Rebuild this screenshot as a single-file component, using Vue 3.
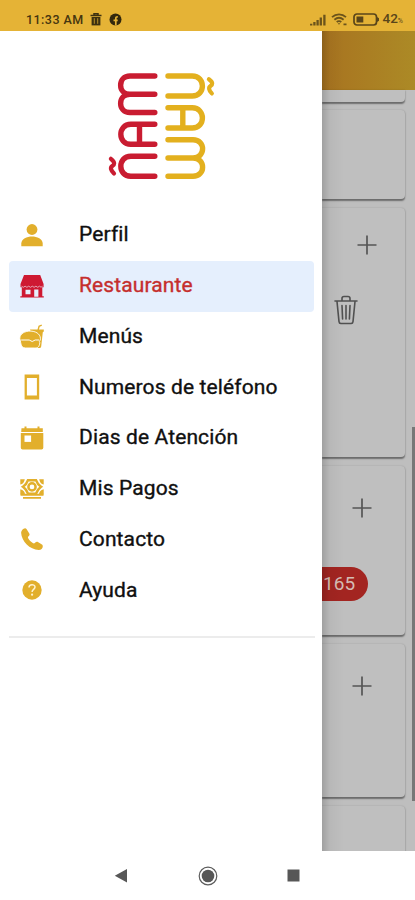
<script setup>
const items = [
  { id: 'perfil', label: 'Perfil' },
  { id: 'restaurante', label: 'Restaurante', active: true },
  { id: 'menus', label: 'Menús' },
  { id: 'telefono', label: 'Numeros de teléfono' },
  { id: 'dias', label: 'Dias de Atención' },
  { id: 'pagos', label: 'Mis Pagos' },
  { id: 'contacto', label: 'Contacto' },
  { id: 'ayuda', label: 'Ayuda' },
]
</script>

<template>
  <div class="screen">
    <header class="status">
      <span class="time">11:33 AM</span>
      <svg class="s-trash" width="12" height="13" viewBox="0 0 12 13">
        <path d="M.5 2.6h11M4 2V.8h4V2" fill="none" stroke="#3d3010" stroke-width="1.5" />
        <path d="M1.6 4h8.8v8.4H1.6z" fill="#3d3010" />
        <path d="M4.3 5.2v5.6M7.7 5.2v5.6" stroke="#b98f26" stroke-width="1" />
      </svg>
      <svg class="s-fb" width="13" height="13" viewBox="0 0 13 13">
        <circle cx="6.5" cy="6.5" r="6" fill="#33280d" />
        <path d="M6.800 12.500V5.400c0-1.200.6-1.700 2-1.600M4.500 7.400h4.200" fill="none" stroke="#e5b336" stroke-width="1.700" />
      </svg>
      <div class="status-right">
        <svg width="16" height="12" viewBox="0 0 16 12">
          <path d="M1.200 11.500V9.800M4.400 11.500V8M7.600 11.500V6M10.800 11.500V3.500M14.400 11.500V.8" stroke="#6b531b" stroke-width="2.300" />
        </svg>
        <svg width="17" height="13" viewBox="0 0 17 13">
          <path d="M1 4.200c4-3.700 10-3.700 14 0M3.400 6.700c2.800-2.400 6.400-2.400 9.200 0M5.700 9c1.500-1.200 3.100-1.200 4.600 0" fill="none" stroke="#6b531b" stroke-width="1.800" />
          <path d="M6.700 10.200h2.600L8 11.800zM12.500 10.600h3v1.600h-3z" fill="#6b531b" />
        </svg>
        <svg width="27" height="13" viewBox="0 0 27 13">
          <rect x="1" y="1" width="22.500" height="11" rx="3" fill="none" stroke="#59451a" stroke-width="1.700" />
          <path d="M3.500 3.500h6.800v6H3.500z" fill="#59451a" />
          <path d="M24 4l2 1.200v2.600L24 9z" fill="#59451a" />
        </svg>
        <span class="pct">42<small>%</small></span>
      </div>
    </header>

    <main class="body">
      <aside class="drawer">
        <svg class="logo" width="112" height="112" viewBox="105 70 112 112" fill="none" stroke-width="5.400" stroke-linecap="round" stroke-linejoin="round">
          <g stroke="#c91c31">
            <path d="M154.800 76H130C117.500 76 117.500 94.300 130 94.300H154.800M130 94.300C117.500 94.300 117.500 112.500 130 112.500H154.800" />
            <path d="M154.800 124.300H130.800C117.500 124.300 117.500 144.300 130.800 144.300H154.800M139.500 124.300V144.300" />
            <path d="M154.800 156.200H130.800C117.500 156.200 117.500 176.300 130.800 176.300H154.800" />
            <path d="M110.900 158.800C115.500 162.500 114.500 164.500 112.300 166S110.500 170 114 173.500" stroke-width="4.200" />
          </g>
          <g stroke="#e3b01e">
            <path d="M168 76H192.200C205.800 76 205.800 96 192.200 96H168" />
            <path d="M168 107.800H192.200C205.800 107.800 205.800 128 192.200 128H168M182.800 107.800V128" />
            <path d="M168 139.700H193C205.800 139.700 205.800 158 193 158H168M193 158C205.800 158 205.800 176.300 193 176.300H168" />
            <path d="M208.900 79.200C213.500 82.500 212.500 84.700 210.500 86S208.500 90 211.800 93.400" stroke-width="4.200" />
          </g>
        </svg>

        <nav class="menu">
          <a v-for="item in items" :key="item.id" class="item" :class="{ active: item.active }">
            <svg class="icon" width="26" height="26" viewBox="0 0 26 26">
              <g v-if="item.id === 'perfil'" fill="currentColor">
                <circle cx="13" cy="7.500" r="5.400" />
                <path d="M2.300 24.200v-2.600C2.300 17 8 14.600 13 14.600s10.700 2.400 10.700 7v2.600z" />
              </g>
              <g v-else-if="item.id === 'restaurante'">
                <path d="M5 2h16.200l3.400 9v3.200h-1.300v9h1.500v1.200H1.300v-1.200h1.500v-9H1.500V11z" fill="currentColor" />
                <path d="M2.500 13.200q1.800 2.200 3.600 0 1.800 2.200 3.600 0 1.800 2.200 3.600 0 1.800 2.200 3.600 0 1.800 2.200 3.600 0 1.500 2 3.100 0" fill="none" stroke="#e8c5d3" stroke-width=".8" />
                <path d="M6.500 16.800h5v4.500h-5zM15.200 16.500h4.200v7.300h-4.200z" fill="#e6effc" />
              </g>
              <g v-else-if="item.id === 'menus'">
                <path d="M11 6.500h7.500l1-3.800 3-1.200.5 1.200-2.300 1-.7 2.800h4.800v2l-1 .7-1.600 14.300q-.2 1.500-1.800 1.500h-3z" fill="currentColor" />
                <path d="M.8 15.300C1.200 5.700 21 5.700 21.400 15.300v1.500l-1 1.600.4 1.300c-.4 4.500-2.300 5.300-5 5.300H6.700c-3 0-4.600-1.600-5-5.300z" fill="currentColor" stroke="#fff" stroke-width=".9" />
                <path d="M2.200 17h8l3 1.500 3-1.500h4" fill="none" stroke="#fff" stroke-width="1" />
              </g>
              <path v-else-if="item.id === 'telefono'" d="M5.600.4h14.600v25.200H5.600zM7.900 4v17.600h10V4z" fill="currentColor" fill-rule="evenodd" />
              <g v-else-if="item.id === 'dias'">
                <path d="M2.500 3.300h3V1.500h2v1.800h11V1.500h2v1.800h3.300V7H2.200zM1.800 8h22.500v14.800q0 1.700-1.700 1.700h-19q-1.800 0-1.800-1.800z" fill="currentColor" />
                <path d="M5.500 10.500h6.600v6.400H5.500z" fill="#fff" />
              </g>
              <g v-else-if="item.id === 'pagos'" fill="none" stroke="currentColor">
                <path d="M1.300 3.300h4.500Q5 8 1.300 8.500zM24.700 3.300h-4.500q.8 4.700 4.500 5.200zM1.300 13.200Q6 14.500 6 18.500H1.300zM24.700 13.200Q20 14.500 20 18.500h4.700z" fill="currentColor" stroke="none" />
                <path d="M9 4.200h8q1.500 4.300 5 6.500-3.500 2.500-5 7H9q-1.500-4.500-5-7Q7.500 8.500 9 4.200z" stroke-width="2.500" />
                <circle cx="13" cy="10.900" r="3.600" stroke-width="2.500" />
                <path d="M1.500 18.800h23M4 21.900h18" stroke-width="1.900" />
              </g>
              <path v-else-if="item.id === 'contacto'" d="M6.100 2.200c-2.100.4-3.900 2.200-4 4.600C2.700 15.500 10.700 23.700 19.800 24c2.300-.1 4-1.500 4-3.700 0-1-.3-1.500-.9-1.900l-4-2.500c-1-.6-2-.1-3.100 1.100-.6.600-1.200.5-2 0-1.800-1.200-3.500-2.900-4.600-4.800-.4-.6-.4-1.100.1-1.600 1.300-1.200 1.600-2.200 1-3.200L7.500 3.100c-.4-.6-.8-.9-1.400-.9z" fill="currentColor" />
              <g v-else>
                <circle cx="13" cy="13" r="9.700" fill="currentColor" />
                <path d="M10 10.600c0-4 6-3.700 6-.5 0 2.400-2.900 2.100-2.900 4.800" fill="none" stroke="#fff3d0" stroke-width="1.500" />
                <circle cx="13.100" cy="17.700" r="1.100" fill="#fff3d0" />
              </g>
            </svg>
            <span>{{ item.label }}</span>
          </a>
        </nav>
        <hr class="rule" />
      </aside>

      <section class="page">
        <div class="toolbar"></div>
        <div class="card first"></div>
        <div class="card second"></div>
        <div class="card third">
          <svg class="plus" width="20" height="20" viewBox="0 0 20 20"><path d="M10 .5v19M.5 10h19" stroke="#555" stroke-width="1.700" /></svg>
          <svg class="trash" width="24" height="30" viewBox="0 0 24 30" fill="none" stroke="#515151" stroke-width="1.600" stroke-linecap="round" stroke-linejoin="round">
            <path d="M1 6h22M3 6.500l2 20.200q.2 1.800 1.800 1.800h10.400q1.600 0 1.800-1.800L21 6.500M8 5.500v-2Q8 1.500 10 1.500h4q2 0 2 2v2M8 10.500l.6 13.500M12 10.500V24M16 10.500L15.400 24" />
          </svg>
        </div>
        <div class="card fourth">
          <svg class="plus" width="20" height="20" viewBox="0 0 20 20"><path d="M10 .5v19M.5 10h19" stroke="#555" stroke-width="1.700" /></svg>
          <span class="chip">165</span>
        </div>
        <div class="card fifth">
          <svg class="plus" width="20" height="20" viewBox="0 0 20 20"><path d="M10 .5v19M.5 10h19" stroke="#555" stroke-width="1.700" /></svg>
        </div>
        <div class="card sixth"></div>
        <div class="scrollbar"></div>
      </section>
    </main>

    <footer class="softkeys">
      <svg width="14" height="16" viewBox="0 0 14 16"><path d="M13 1v13.500L.8 7.800z" fill="#575757" /></svg>
      <svg width="20" height="20" viewBox="0 0 20 20">
        <circle cx="10" cy="10" r="8.800" fill="none" stroke="#5c5c5c" stroke-width="1.200" />
        <circle cx="10" cy="10" r="6.300" fill="#575757" />
      </svg>
      <svg width="13" height="13" viewBox="0 0 13 13"><path d="M.5.500h12v12H.5z" fill="#575757" /></svg>
    </footer>
  </div>
</template>

<style>
body { margin: 0; overflow: hidden; }
</style>

<style scoped>
.screen {
  width: 415px;
  height: 900px;
  display: flex;
  flex-direction: column;
  overflow: hidden;
  background: #fff;
  font-family: Roboto, sans-serif;
}
.status {
  box-sizing: border-box;
  height: 31px;
  flex: none;
  display: flex;
  align-items: center;
  padding: 8px 12px 0 26px;
  background: #e5b336;
  color: #45350f;
}
.time { width: 58px; font-size: 12.5px; font-weight: 500; letter-spacing: 0.45px; white-space: nowrap; }
.s-trash { margin-left: 6px; }
.s-fb { margin-left: 7px; }
.status-right { margin-left: auto; display: flex; align-items: center; gap: 5px; color: #59451a; }
.pct { margin-left: -2px; font-size: 13.5px; font-weight: 500; line-height: 14px; }
.pct small { font-size: 7px; font-weight: 400; }
.body { height: 820px; flex: none; display: flex; }
.drawer {
  width: 322px;
  flex: none;
  display: flex;
  flex-direction: column;
  background: #fff;
}
.logo { margin: 39px 0 0 105px; flex: none; }
.menu { display: flex; flex-direction: column; margin: 28px 8px 0 9px; }
.item {
  box-sizing: border-box;
  height: 50.75px;
  display: flex;
  align-items: center;
  gap: 34px;
  padding: 0 0 1px 10px;
  border-radius: 4px;
  color: #e2af2c;
}
.item span { color: #101010; font-size: 21px; line-height: 25px; letter-spacing: 0.12px; -webkit-text-stroke: 0.35px currentColor; }
.item.active { background: #e5effd; color: #ce1932; }
.item.active span { color: #c52e2d; }
.rule { width: 306px; height: 2px; margin: 20px 0 0 9px; border: 0; background: #ececec; }
.page {
  position: relative;
  flex: 1;
  display: flex;
  flex-direction: column;
  overflow: hidden;
  background: #bebebe;
}
.page::before {
  content: '';
  position: absolute;
  inset: 0 auto 0 0;
  width: 22px;
  background: linear-gradient(90deg, rgba(0, 0, 0, 0.16), rgba(0, 0, 0, 0.04) 35%, transparent);
}
.toolbar { height: 59px; flex: none; background: linear-gradient(90deg, #a87320, #ac8a26); }
.card {
  box-sizing: border-box;
  width: 83px;
  flex: none;
  border-radius: 0 4px 4px 0;
  box-shadow: 0 1.500px 1.500px rgba(0, 0, 0, 0.42), 0 0 2px rgba(0, 0, 0, 0.12);
  background: #bfbfbf;
}
.first { height: 12px; border-top-right-radius: 0; }
.second { height: 89px; margin-top: 8px; }
.third { height: 249px; margin-top: 9px; padding: 27px 0 0 12px; display: flex; flex-direction: column; gap: 40px; }
.third .plus { margin-left: 23px; }
.fourth { height: 169px; margin-top: 9px; padding-top: 32px; display: flex; flex-direction: column; }
.fourth .plus, .fifth .plus { margin-left: 30px; }
.fifth { height: 153px; margin-top: 9px; padding-top: 32px; }
.sixth { height: 60px; margin-top: 9px; }
.plus { display: block; flex: none; }
.chip {
  box-sizing: border-box;
  width: 46px;
  height: 34px;
  margin-top: 49px;
  padding-left: 1px;
  border-radius: 0 17px 17px 0;
  background: #a32521;
  color: #d5bdb5;
  font-size: 19px;
  line-height: 34px;
  letter-spacing: 0.1px;
}
.scrollbar { position: absolute; right: 0; top: 396px; width: 3px; height: 374px; background: #777; }
.softkeys {
  box-sizing: border-box;
  height: 49px;
  flex: none;
  display: flex;
  align-items: center;
  justify-content: space-between;
  padding: 0 115px 0 114px;
  background: #fff;
}
</style>
